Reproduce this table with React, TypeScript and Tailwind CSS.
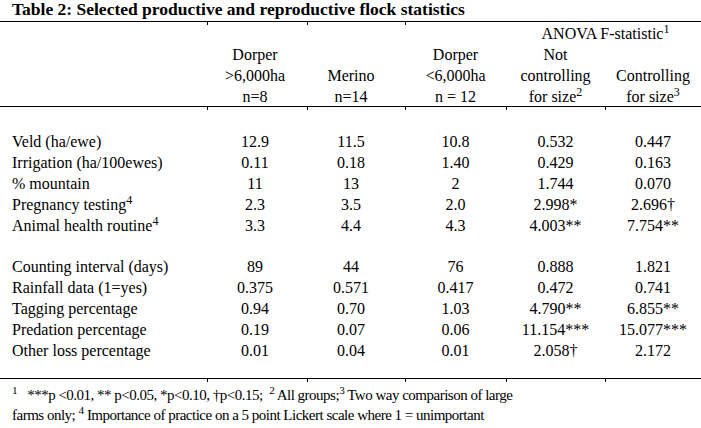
const cols = "grid grid-cols-[207px_100px_98px_101px_99px_94px]";

type Row = { label: string; sup?: string; v: string[] };

const groupA: Row[] = [
  { label: "Veld (ha/ewe)", v: ["12.9", "11.5", "10.8", "0.532", "0.447"] },
  { label: "Irrigation (ha/100ewes)", v: ["0.11", "0.18", "1.40", "0.429", "0.163"] },
  { label: "% mountain", v: ["11", "13", "2", "1.744", "0.070"] },
  { label: "Pregnancy testing", sup: "4", v: ["2.3", "3.5", "2.0", "2.998*", "2.696\u2020"] },
  { label: "Animal health routine", sup: "4", v: ["3.3", "4.4", "4.3", "4.003**", "7.754**"] },
];

const groupB: Row[] = [
  { label: "Counting interval (days)", v: ["89", "44", "76", "0.888", "1.821"] },
  { label: "Rainfall data (1=yes)", v: ["0.375", "0.571", "0.417", "0.472", "0.741"] },
  { label: "Tagging percentage", v: ["0.94", "0.70", "1.03", "4.790**", "6.855**"] },
  { label: "Predation percentage", v: ["0.19", "0.07", "0.06", "11.154***", "15.077***"] },
  { label: "Other loss percentage", v: ["0.01", "0.04", "0.01", "2.058\u2020", "2.172"] },
];

// small offsets so columns sit where the scanned table has them
const shift = ["pr-[4px]", "pr-[10px]", "", "", "pl-[2px]"];

const Ticks = () => (
  <div className={`${cols} h-[3px]`}>
    <div />
    <div className="border-l border-black" />
    <div className="border-l border-black" />
    <div className="border-l border-black" />
    <div className="border-l border-black" />
    <div className="border-l border-black" />
  </div>
);

const DataRow = ({ r }: { r: Row }) => (
  <div className={`${cols} h-[20.9px]`}>
    <div className="pl-[12px] whitespace-nowrap">
      {r.label}
      {r.sup && <sup>{r.sup}</sup>}
    </div>
    {r.v.map((x, i) => (
      <div key={i} className={`text-center whitespace-nowrap ${shift[i]}`}>
        {x}
      </div>
    ))}
  </div>
);

export default function App() {
  return (
    <div className="w-[701px] h-[428px] bg-white text-black font-['Liberation_Serif','Times_New_Roman',serif] text-[16px] leading-[21px] overflow-hidden">
      <div className="h-[21px] pl-[12px] text-[17.5px] font-bold leading-[19px] whitespace-nowrap">
        Table 2: Selected productive and reproductive flock statistics
      </div>

      <div className="border-t border-black pt-[1px]">
        <div className={`${cols} h-[21px] -mb-[3px]`}>
          <div />
          <div className="border-l border-black h-[3px] -mt-[1px]" />
          <div className="border-l border-black h-[3px] -mt-[1px]" />
          <div className="border-l border-black h-[3px] -mt-[1px]" />
          <div className="col-span-2 text-center pl-[6px] whitespace-nowrap">
            ANOVA F-statistic<sup>1</sup>
          </div>
        </div>
        <div className="h-[3px]" />
        <div className={`${cols} h-[21px]`}>
          <div />
          <div className={`text-center ${shift[0]}`}>Dorper</div>
          <div />
          <div className="text-center">Dorper</div>
          <div className="text-center">Not</div>
          <div />
        </div>
        <div className={`${cols} h-[21px]`}>
          <div />
          <div className={`text-center ${shift[0]}`}>&gt;6,000ha</div>
          <div className={`text-center ${shift[1]}`}>Merino</div>
          <div className="text-center">&lt;6,000ha</div>
          <div className="text-center">controlling</div>
          <div className="text-center pl-[2px]">Controlling</div>
        </div>
        <div className={`${cols} h-[20px]`}>
          <div />
          <div className={`text-center ${shift[0]}`}>n=8</div>
          <div className={`text-center ${shift[1]}`}>n=14</div>
          <div className="text-center">n = 12</div>
          <div className="text-center">
            for size<sup>2</sup>
          </div>
          <div className="text-center pl-[2px]">
            for size<sup>3</sup>
          </div>
        </div>
      </div>

      <div className="border-t border-black">
        <Ticks />
        <div className="h-[21px]" />
        {groupA.map((r) => (
          <DataRow key={r.label} r={r} />
        ))}
        <div className="h-[21px]" />
        {groupB.map((r) => (
          <DataRow key={r.label} r={r} />
        ))}
        <div className="h-[17px]" />
      </div>

      <div className="border-t border-black">
        <Ticks />
        <div className="pt-[3px] pl-[12px] text-[15px] leading-[20px] tracking-[-0.5px] whitespace-nowrap">
          <sup>1</sup>
          <span className="pl-[10px]">
            ***p &lt;0.01, ** p&lt;0.05, *p&lt;0.10, {"\u2020"}p&lt;0.15;{"\u00a0\u00a0"}
            <sup>2</sup> All groups;<sup>3</sup> Two way comparison of large
          </span>
          <br />
          farms only; <sup>4</sup> Importance of practice on a 5 point Lickert scale where 1 = unimportant
        </div>
      </div>
    </div>
  );
}
